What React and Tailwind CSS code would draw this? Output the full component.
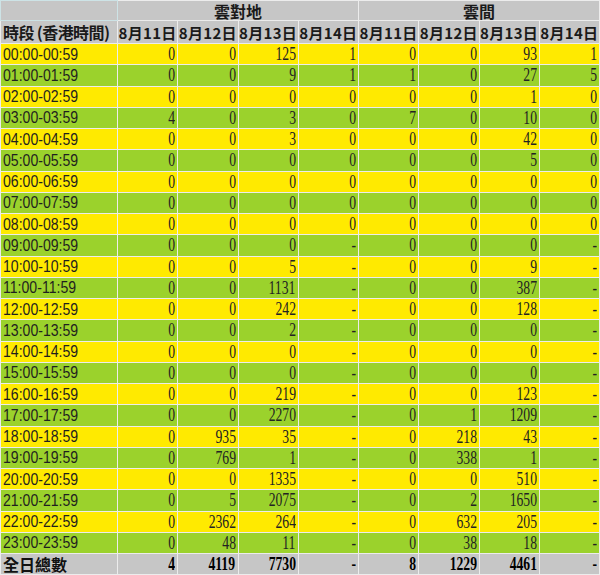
import React from "react";

const hours = [
  ["00:00-00:59", [0, 0, 125, 1], [0, 0, 93, 1]],
  ["01:00-01:59", [0, 0, 9, 1], [1, 0, 27, 5]],
  ["02:00-02:59", [0, 0, 0, 0], [0, 0, 1, 0]],
  ["03:00-03:59", [4, 0, 3, 0], [7, 0, 10, 0]],
  ["04:00-04:59", [0, 0, 3, 0], [0, 0, 42, 0]],
  ["05:00-05:59", [0, 0, 0, 0], [0, 0, 5, 0]],
  ["06:00-06:59", [0, 0, 0, 0], [0, 0, 0, 0]],
  ["07:00-07:59", [0, 0, 0, 0], [0, 0, 0, 0]],
  ["08:00-08:59", [0, 0, 0, 0], [0, 0, 0, 0]],
  ["09:00-09:59", [0, 0, 0, "-"], [0, 0, 0, "-"]],
  ["10:00-10:59", [0, 0, 5, "-"], [0, 0, 9, "-"]],
  ["11:00-11:59", [0, 0, 1131, "-"], [0, 0, 387, "-"]],
  ["12:00-12:59", [0, 0, 242, "-"], [0, 0, 128, "-"]],
  ["13:00-13:59", [0, 0, 2, "-"], [0, 0, 0, "-"]],
  ["14:00-14:59", [0, 0, 0, "-"], [0, 0, 0, "-"]],
  ["15:00-15:59", [0, 0, 0, "-"], [0, 0, 0, "-"]],
  ["16:00-16:59", [0, 0, 219, "-"], [0, 0, 123, "-"]],
  ["17:00-17:59", [0, 0, 2270, "-"], [0, 1, 1209, "-"]],
  ["18:00-18:59", [0, 935, 35, "-"], [0, 218, 43, "-"]],
  ["19:00-19:59", [0, 769, 1, "-"], [0, 338, 1, "-"]],
  ["20:00-20:59", [0, 0, 1335, "-"], [0, 0, 510, "-"]],
  ["21:00-21:59", [0, 5, 2075, "-"], [0, 2, 1650, "-"]],
  ["22:00-22:59", [0, 2362, 264, "-"], [0, 632, 205, "-"]],
  ["23:00-23:59", [0, 48, 11, "-"], [0, 38, 18, "-"]],
];

const totals = [
  [4, 4119, 7730, "-"],
  [8, 1229, 4461, "-"],
];

const days = ["8月11日", "8月12日", "8月13日", "8月14日"];

const cjk = "font-['Noto_Sans_CJK_TC','Noto_Sans_CJK_SC',sans-serif]";
const cell = "border border-[#ececec] p-0 leading-none";

const Num = ({ value, bold }) => (
  <td className={`${cell} text-right pr-[2px]`}>
    <span
      className={`inline-block origin-right scale-x-[0.76] font-['Liberation_Serif',serif] text-[18px] leading-none ${
        bold ? "font-bold text-black" : "text-[#222]"
      }`}
    >
      {value}
    </span>
  </td>
);

export default function App() {
  return (
    <div className="w-[600px] bg-white leading-none">
      <table className="w-[600px] table-fixed border-collapse leading-none">
        <colgroup>
          <col className="w-[117px]" />
          {[...days, ...days].map((d, i) => (
            <col key={i} />
          ))}
        </colgroup>
        <thead>
          <tr className="h-[20px] bg-[#c6c6c6]">
            <th className="border border-[#cde3e6] p-0"></th>
            <th colSpan={4} className={`${cell} ${cjk} text-[16px] font-bold text-[#1a1a1a]`}>
              雲對地
            </th>
            <th colSpan={4} className={`${cell} ${cjk} text-[16px] font-bold text-[#1a1a1a]`}>
              雲間
            </th>
          </tr>
          <tr className="h-[23px] bg-[#c6c6c6]">
            <th className={`${cell} ${cjk} text-left pl-[2px] text-[16px] font-bold text-[#1a1a1a] whitespace-nowrap tracking-[-0.6px]`}>
              時段 (香港時間)
            </th>
            {[...days, ...days].map((d, i) => (
              <th
                key={i}
                className={`${cell} ${cjk} text-center text-[15px] font-bold text-[#1a1a1a] whitespace-nowrap tracking-[0.3px]`}
              >
                {d}
              </th>
            ))}
          </tr>
        </thead>
        <tbody>
          {hours.map(([label, a, b], i) => (
            <tr key={label} className={`h-[21.25px] ${i % 2 === 0 ? "bg-[#ffea00]" : "bg-[#9bd22c]"}`}>
              <td className={`${cell} pl-[2px] whitespace-nowrap`}>
                <span className="inline-block origin-left scale-x-[0.88] font-['Liberation_Sans',sans-serif] text-[16px] leading-none text-[#1f1f1f]">
                  {label}
                </span>
              </td>
              {[...a, ...b].map((v, j) => (
                <Num key={j} value={v} />
              ))}
            </tr>
          ))}
          <tr className="h-[21px] bg-[#c6c6c6]">
            <td className={`${cell} ${cjk} pl-[2px] text-[16px] font-bold text-[#111]`}>
              全日總數
            </td>
            {[...totals[0], ...totals[1]].map((v, j) => (
              <Num key={j} value={v} bold />
            ))}
          </tr>
        </tbody>
      </table>
    </div>
  );
}
